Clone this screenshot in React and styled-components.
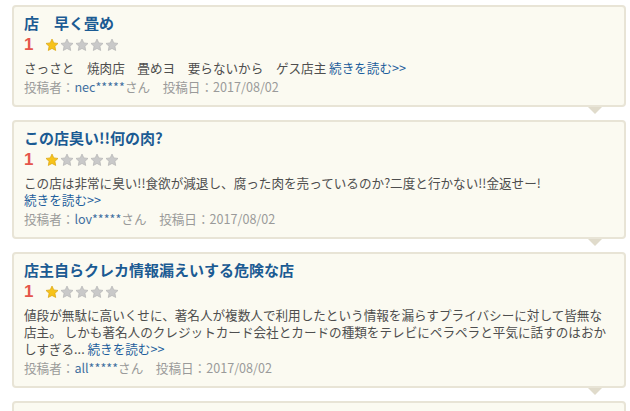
import styled, { createGlobalStyle } from "styled-components"

const GlobalStyle = createGlobalStyle`
  html, body {
    margin: 0;
    padding: 0;
    background: #ffffff;
  }
  body {
    font-family: "Noto Sans CJK JP", "Noto Sans", sans-serif;
    color: #555555;
  }
`

const List = styled.ul`
  list-style: none;
  margin: 0;
  padding: 5px 4px 0 12px;
  height: 411px;
  overflow: hidden;
  box-sizing: border-box;
`

const Card = styled.li`
  position: relative;
  border: 2px solid #e8e4d6;
  border-radius: 4px;
  background: #fbfaf1;
  padding: 6px 10px 10px;
  margin-bottom: 13px;

  &::after {
    content: "";
    position: absolute;
    right: 22px;
    bottom: -9px;
    border-left: 7px solid transparent;
    border-right: 7px solid transparent;
    border-top: 7px solid #e0dbcb;
  }
`

const Title = styled.h2`
  margin: 0;
  font-size: 15px;
  line-height: 20px;
  font-weight: bold;
  color: #1b5b93;
  white-space: nowrap;
`

const Rating = styled.div`
  display: flex;
  align-items: center;
  height: 20px;
  margin-top: 2px;
`

const Score = styled.span`
  font-family: "Liberation Sans", Arial, sans-serif;
  font-size: 17px;
  font-weight: bold;
  color: #e5554b;
  width: 21px;
`

const Stars = styled.span`
  display: flex;
  gap: 1px;
`

const Body = styled.p`
  margin: 4px 0 0;
  font-size: 12.6px;
  line-height: 17px;
  color: #4e4e4e;

  span {
    display: block;
    white-space: nowrap;
  }
`

const More = styled.a`
  color: #1d5e9c;
  text-decoration: none;
`

const Meta = styled.p`
  margin: 2px 0 0;
  font-size: 12.6px;
  line-height: 17px;
  color: #9a9a9a;
  white-space: nowrap;

  b {
    font-weight: normal;
    color: #3f6f9f;
  }
`

const Star = ({ on }) => (
  <svg width="14" height="14" viewBox="0 0 24 24">
    <path
      d="M12 1.8l3.1 6.6 7.2.9-5.3 5 1.4 7.1L12 17.9l-6.4 3.5 1.4-7.1-5.3-5 7.2-.9z"
      fill={on ? "#f7c31a" : "#c9c9c9"}
      stroke={on ? "#d9a30e" : "#b3b3b3"}
      strokeWidth="1.2"
      strokeLinejoin="round"
    />
  </svg>
)

const reviews = [
  {
    title: "店　早く畳め",
    lines: ["さっさと　焼肉店　畳めヨ　要らないから　ゲス店主 "],
    user: "nec*****",
  },
  {
    title: "この店臭い!!何の肉?",
    lines: ["この店は非常に臭い!!食欲が減退し、腐った肉を売っているのか?二度と行かない!!金返せー!", ""],
    user: "lov*****",
  },
  {
    title: "店主自らクレカ情報漏えいする危険な店",
    lines: [
      "値段が無駄に高いくせに、著名人が複数人で利用したという情報を漏らすプライバシーに対して皆無な",
      "店主。 しかも著名人のクレジットカード会社とカードの種類をテレビにペラペラと平気に話すのはおか",
      "しすぎる... ",
    ],
    user: "all*****",
  },
  {
    title: "ボッタクリ店",
    lines: ["料金が高すぎる。 "],
    user: "tak*****",
  },
]

const App = () => (
  <>
    <GlobalStyle />
    <List>
      {reviews.map((r, i) => (
        <Card key={i}>
          <Title>{r.title}</Title>
          <Rating>
            <Score>1</Score>
            <Stars>
              {[0, 1, 2, 3, 4].map((n) => (
                <Star key={n} on={n === 0} />
              ))}
            </Stars>
          </Rating>
          <Body>
            {r.lines.map((line, j) => (
              <span key={j}>
                {line}
                {j === r.lines.length - 1 && <More href="#">続きを読む&gt;&gt;</More>}
              </span>
            ))}
          </Body>
          <Meta>
            投稿者：<b>{r.user}</b>さん　投稿日：2017/08/02
          </Meta>
        </Card>
      ))}
    </List>
  </>
)

export default App
